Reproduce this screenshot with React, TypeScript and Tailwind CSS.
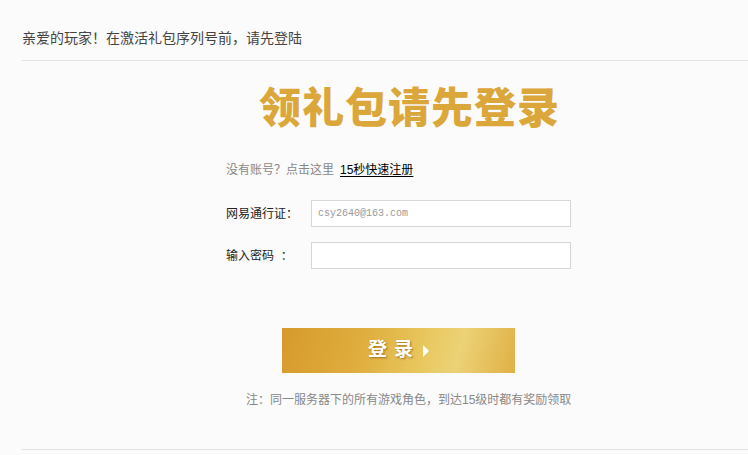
export default function App() {
  return (
    <div
      className="w-[748px] h-[455px] overflow-hidden bg-[#fbfbfb] pl-[22px]"
      style={{ fontFamily: '"Liberation Sans", "Noto Sans CJK SC", sans-serif' }}
    >
      {/* header */}
      <div className="h-[61px] border-b border-[#e6e3de] pt-[30px]">
        <p className="text-[14px] leading-[16px] text-[#444]">亲爱的玩家！在激活礼包序列号前，请先登陆</p>
      </div>

      {/* login form */}
      <div className="ml-[204px] w-[360px]">
        <h1 className="mt-[24px] ml-[33px] text-[42px] leading-[48px] font-black text-[#dca73a] tracking-[1px]">
          领礼包请先登录
        </h1>

        <p className="mt-[29px] text-[12px] leading-[16px] text-[#888]">
          没有账号？点击这里
          <a href="#" className="ml-[6px] text-black underline underline-offset-2">15秒快速注册</a>
        </p>

        <div className="mt-[22px] flex flex-col gap-[15px]">
          <div className="flex items-center">
            <label className="w-[85px] text-[12px] text-[#222]">网易通行证：</label>
            <input
              type="text"
              placeholder="csy2640@163.com"
              className="w-[260px] h-[27px] border border-[#d6d6d6] bg-white px-[6px] text-[10px] text-[#999] placeholder:text-[#999] outline-none"
              style={{ fontFamily: '"Liberation Mono", monospace' }}
            />
          </div>
          <div className="flex items-center">
            <label className="w-[85px] text-[12px] text-[#222]">输入密码&nbsp;&nbsp;：</label>
            <input
              type="password"
              className="w-[260px] h-[27px] border border-[#d6d6d6] bg-white px-[6px] text-[12px] outline-none"
            />
          </div>
        </div>

        <button className="mt-[59px] ml-[56px] w-[233px] h-[45px] flex items-center justify-center gap-[3px] bg-[linear-gradient(105deg,#d79a2c_0%,#dfae3e_35%,#e8c75e_60%,#ecd276_75%,#e0b045_100%)]">
          <span className="text-[19px] font-bold text-white tracking-[7px] [text-shadow:1px_1px_2px_rgba(120,70,0,0.6)]">登录</span>
          <span className="w-0 h-0 border-y-[6px] border-y-transparent border-l-[6px] border-l-white mt-[1px]" />
        </button>

        <p className="mt-[19px] ml-[20px] text-[12px] leading-[16px] text-[#888] whitespace-nowrap">
          注：同一服务器下的所有游戏角色，到达15级时都有奖励领取
        </p>
      </div>

      <div className="mt-[41px] border-t border-[#e6e3de]" />
    </div>
  );
}
